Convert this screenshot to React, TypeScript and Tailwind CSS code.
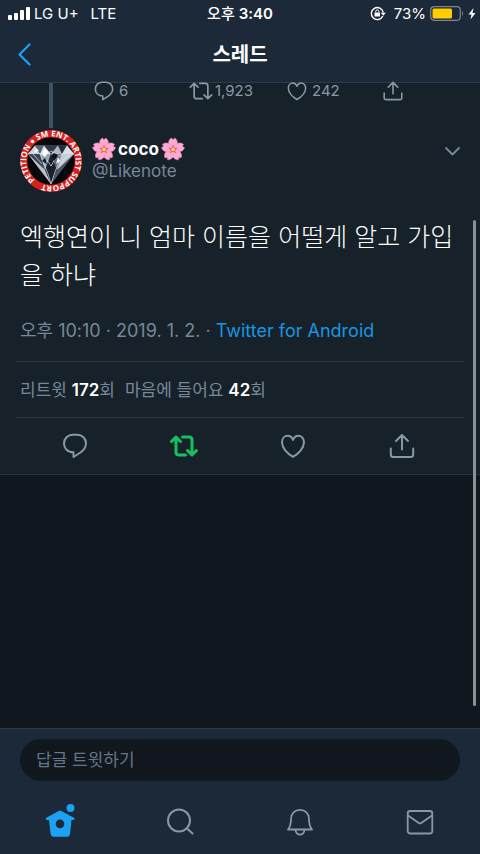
import { useId } from 'react';
import type { ReactNode } from 'react';

type IconProps = { className?: string };

const tabs = [
  { id: 'home', label: '홈', icon: <HomeIcon /> },
  { id: 'search', label: '검색', icon: <SearchIcon /> },
  { id: 'alerts', label: '알림', icon: <BellIcon /> },
  { id: 'messages', label: '쪽지', icon: <MailIcon /> },
];

function Stroke({
  children,
  className = '',
  width = 2,
}: {
  children: ReactNode;
  className?: string;
  width?: number;
}) {
  return (
    <svg
      viewBox="0 0 28 28"
      fill="none"
      stroke="currentColor"
      strokeWidth={width}
      strokeLinecap="round"
      strokeLinejoin="round"
      aria-hidden="true"
      className={`shrink-0 ${className}`}
    >
      {children}
    </svg>
  );
}

function ReplyIcon({ className }: IconProps) {
  return (
    <Stroke className={className}>
      <path d="M12.500 20.300C6.500 20.300 3 16.500 3 11.500C3 6.400 6.800 2.800 11.800 2.800H16.200C21.200 2.800 25 6.400 25 11.500C25 15.800 22.500 18.300 19.500 20.500L12.500 25Z" />
    </Stroke>
  );
}

function RetweetIcon({ className, width = 2 }: IconProps & { width?: number }) {
  return (
    <Stroke className={className} width={width}>
      <path d="M1.500 9.500L6 5L10.500 9.500M6 5.500V20Q6 23 9 23H15.500M26.500 18.500L22 23L17.500 18.500M22 22.500V8Q22 5 19 5H12.500" />
    </Stroke>
  );
}

function HeartIcon({ className }: IconProps) {
  return (
    <Stroke className={className}>
      <path d="M14 8C13 5.200 11 3.800 8.800 3.800C5.500 3.800 3 6.500 3 10.200C3 16 8.500 21.800 14 24.800C19.500 21.800 25 16 25 10.200C25 6.500 22.500 3.800 19.200 3.800C17 3.800 15 5.200 14 8Z" />
    </Stroke>
  );
}

function ShareIcon({ className }: IconProps) {
  return (
    <Stroke className={className}>
      <path d="M14 17.500V3.500M8 9L14 3L20 9M2.800 16.500V22.500Q2.800 25 5.300 25H22.700Q25.200 25 25.200 22.500V16.500" />
    </Stroke>
  );
}

function HomeIcon() {
  return (
    <svg viewBox="0 0 32 36" className="h-9 w-8" fill="#1da1f2" aria-hidden="true">
      <circle cx="26.500" cy="4" r="4" />
      <path
        fillRule="evenodd"
        d="M16 6.500Q16.500 6.500 17.300 7L30 13.800Q31 14.700 30.300 15.500Q29.800 16.100 27.500 16L26 30Q25.700 32.700 23.200 32.700H9.300Q7 32.700 6.600 30L5 16Q2.500 16.100 2 15.500Q1.300 14.700 2.300 13.800L14.700 7Q15.500 6.500 16 6.500ZM16 15.600A4.300 4.300 0 1 0 16 24.200A4.300 4.300 0 1 0 16 15.600Z"
      />
    </svg>
  );
}

function SearchIcon() {
  return (
    <Stroke className="size-7">
      <circle cx="13" cy="12.500" r="11" />
      <path d="M21 20.500L26.500 25.500" />
    </Stroke>
  );
}

function BellIcon() {
  return (
    <Stroke className="size-7" width={1.8}>
      <path d="M2 21.500C4.500 18.500 5 16 5 11C5 5.500 8.800 1.800 14 1.800C19.200 1.800 23 5.500 23 11C23 16 23.500 18.500 26 21.500ZM9.500 21.500C9.500 28.200 18.500 28.200 18.500 21.500" />
    </Stroke>
  );
}

function MailIcon() {
  return (
    <Stroke className="size-7" width={1.8}>
      <rect x="1.700" y="3" width="24.600" height="22.500" rx="2.500" />
      <path d="M2 7.500L12.800 15Q14 15.800 15.200 15L26 7.500" />
    </Stroke>
  );
}

function Blossom() {
  return (
    <svg viewBox="0 0 24 24" className="size-6 shrink-0" role="img" aria-label="벚꽃">
      {[0, 72, 144, 216, 288].map((deg) => (
        <g key={deg} transform={`rotate(${deg} 12 12.500)`}>
          <path
            d="M12 12.500C6.500 9 6.500 3.500 10.300 1L12 2.700L13.700 1C17.500 3.500 17.500 9 12 12.500Z"
            fill="#ffa9cf"
            stroke="#f08fbd"
            strokeWidth="0.500"
          />
          <path d="M12 12V8.500" stroke="#dc3f87" strokeWidth="0.900" strokeLinecap="round" />
        </g>
      ))}
      <circle cx="12" cy="12.500" r="2.600" fill="#d64b6c" />
      <circle cx="12" cy="12.500" r="2" fill="#ffd24a" />
    </svg>
  );
}

function Avatar() {
  const ring = useId();
  return (
    <svg viewBox="0 0 62 62" className="size-[62px] shrink-0" role="img" aria-label="coco">
      <defs>
        <path
          id={ring}
          d="M15.120 49.920A24.700 24.700 0 0 1 46.880 12.080A24.700 24.700 0 0 1 15.120 49.920"
        />
      </defs>
      <circle cx="31" cy="31" r="31" fill="#d8201f" />
      <circle cx="31" cy="31" r="23.800" fill="#07080b" />
      <path d="M15 15.500L47 15.500L54 24L31 54L8 24Z" fill="#77808f" />
      <path d="M15 15.500L20 24H8Z" fill="#c9d2dd" />
      <path d="M15 15.500H24L20 24Z" fill="#5a6474" />
      <path d="M24 15.500L31 24H20Z" fill="#dfe6ef" />
      <path d="M24 15.500H38L31 24Z" fill="#303848" />
      <path d="M38 15.500L42 24H31Z" fill="#aeb8c6" />
      <path d="M38 15.500H47L42 24Z" fill="#272e3a" />
      <path d="M47 15.500L54 24H42Z" fill="#d7dee7" />
      <path d="M8 24H20L25 40Z" fill="#3b4452" />
      <path d="M8 24L25 40L31 54Z" fill="#b9c2ce" />
      <path d="M20 24H31L25 40Z" fill="#98a3b4" />
      <path d="M31 24L25 40L31 54L37 40Z" fill="#1c222d" />
      <path d="M31 24H42L37 40Z" fill="#5f6979" />
      <path d="M42 24H54L37 40Z" fill="#c3ccd8" />
      <path d="M54 24L37 40L31 54Z" fill="#4a5362" />
      <path
        d="M8 24L16 22L25 26L31 21L39 26L48 21L54 24M20 24L28 44L31 54L35 42L42 24M13 24L22 34M49 24L40 34M27 30L31 36L35 29"
        fill="none"
        stroke="#dde4ec"
        strokeWidth="0.700"
      />
      <path d="M25 19L28 22L25 27L22 24ZM38 27L40 31L36 34ZM16 18L19 21L14 22Z" fill="#fff" />
      <path d="M31 26L34 23L38 25L34 31ZM22 31L25 28L27 34Z" fill="#0d1119" />
      <text
        fill="#fff"
        fontSize="8"
        className="font-['Open_Sans','Noto_Sans',sans-serif] font-bold"
      >
        <textPath href={`#${ring}`}>PETITION ● SM ENT. ARTIST SUPPORT</textPath>
      </text>
    </svg>
  );
}

function StatusBar() {
  return (
    <div className="grid h-[27px] grid-cols-3 items-center px-2 text-[15px] leading-5">
      <div className="flex items-center gap-1">
        <svg viewBox="0 0 22 14" className="h-3.5 w-[22px]" fill="#fff" aria-hidden="true">
          <rect x="0" y="8" width="4" height="5" rx="1" />
          <rect x="6" y="6" width="4" height="7" rx="1" />
          <rect x="12" y="3" width="4" height="10" rx="1" />
          <rect x="18" y="0" width="4" height="13" rx="1" />
        </svg>
        <span>LG U+</span>
        <span className="ml-2">LTE</span>
      </div>
      <span className="text-center font-medium">
        오후 <span className="font-semibold">3:40</span>
      </span>
      <div className="-mr-1 flex items-center justify-end gap-1">
        <svg viewBox="0 0 16 16" className="mr-1 size-4" fill="none" stroke="#fff" strokeWidth="1.400" aria-hidden="true">
          <path d="M12.800 10A6 6 0 1 1 13.200 6.500" />
          <path d="M10.800 6.700H15.800L13.300 9.700Z" fill="#fff" stroke="none" />
          <rect x="4.500" y="6.500" width="5.500" height="4" rx="0.500" fill="#fff" stroke="none" />
          <path d="M5.700 6.500V5.500A1.600 1.600 0 0 1 8.900 5.500V6.500" strokeWidth="1" />
        </svg>
        <span>73%</span>
        <svg viewBox="0 0 34 16" className="h-4 w-[34px]" aria-hidden="true">
          <rect x="0.700" y="0.700" width="29.600" height="13.600" rx="3.500" fill="none" stroke="#7d8791" strokeWidth="1.200" />
          <rect x="2.500" y="2.500" width="19.500" height="10" rx="1.500" fill="#ffcc00" />
          <path d="M32 5Q34 7.500 32 10Z" fill="#7d8791" />
        </svg>
        <svg viewBox="0 0 8 12" className="h-3 w-2" fill="#fff" aria-hidden="true">
          <path d="M5.500 0L0.500 6.500H3.500L2.500 11.500L7.500 5H4.500Z" />
        </svg>
      </div>
    </div>
  );
}

export default function App() {
  return (
    <div className="flex h-screen flex-col bg-[#10171e] font-['Inter','Noto_Sans_CJK_KR',sans-serif] text-white">
      <header className="border-b border-[#2b3b4a] bg-[#1c2938]">
        <StatusBar />
        <div className="grid h-[55px] grid-cols-3 items-center px-4">
          <button type="button" aria-label="뒤로" className="text-[#1da1f2]">
            <svg viewBox="0 0 16 24" className="h-6 w-4" fill="none" stroke="currentColor" strokeWidth="2.200" strokeLinecap="round" strokeLinejoin="round" aria-hidden="true">
              <path d="M13.500 1.500L3.500 11.500L13.500 21.500" />
            </svg>
          </button>
          <h1 className="text-center text-xl leading-6 font-bold">스레드</h1>
        </div>
      </header>

      <main className="relative flex-1">
        <article className="border-b border-[#26333f] bg-[#17212a]">
          <div className="flex h-[45px] text-[15px] leading-4 text-[#8899a6]">
            <div className="ml-[49px] w-1 shrink-0 bg-[#3d5466]" />
            <div className="ml-10 grid h-4 flex-1 grid-cols-[96px_97px_96px_1fr] grid-rows-[16px]">
              <button type="button" aria-label="답글" className="flex items-center gap-1">
                <ReplyIcon className="size-[22px]" />6
              </button>
              <button type="button" aria-label="리트윗" className="flex items-center gap-0.5">
                <RetweetIcon className="size-6" />
                1,923
              </button>
              <button type="button" aria-label="마음에 들어요" className="flex items-center gap-1">
                <HeartIcon className="size-[22px]" />
                242
              </button>
              <button type="button" aria-label="공유" className="flex items-center">
                <ShareIcon className="size-[22px]" />
              </button>
            </div>
          </div>

          <div className="flex gap-2.5 px-5 pt-0.5">
            <Avatar />
            <div className="flex-1 pt-[7px]">
              <div className="flex items-center">
                <Blossom />
                <span className="px-0.5 text-[17px] leading-6 font-bold">coco</span>
                <Blossom />
              </div>
              <p className="text-[17px] leading-5 text-[#76889a]">@Likenote</p>
            </div>
            <button type="button" aria-label="더 보기" className="mt-[13px] h-4 text-[#76889a]">
              <svg viewBox="0 0 16 16" className="size-4" fill="none" stroke="currentColor" strokeWidth="1.800" strokeLinecap="round" strokeLinejoin="round" aria-hidden="true">
                <path d="M2 5L8.500 11.500L15 5" />
              </svg>
            </button>
          </div>

          <p className="px-5 pt-[26px] text-[25px] leading-[38px] font-light">
            엑행연이 니 엄마 이름을 어떨게 알고 가입을 하냐
          </p>

          <p className="px-5 pt-[25px] pb-[18px] text-lg leading-6 text-[#76889a]">
            오후 10:10 · 2019. 1. 2. ·{' '}
            <a href="#client" className="text-[#1b95e0]">
              Twitter for Android
            </a>
          </p>

          <div className="mx-4 flex h-[57px] items-center gap-2.5 border-y border-[#2b3843] px-1 text-[17px] leading-6 text-[#76889a]">
            <span>
              리트윗 <b className="font-semibold text-white">172</b>회
            </span>
            <span>
              마음에 들어요 <b className="font-semibold text-white">42</b>회
            </span>
          </div>

          <div className="grid h-14 grid-cols-4 items-center pr-6 pl-5 text-[#8899a6]">
            <button type="button" aria-label="답글" className="flex justify-center">
              <ReplyIcon className="size-7" />
            </button>
            <button type="button" aria-label="리트윗 취소" className="flex justify-center text-[#17bf63]">
              <RetweetIcon className="size-7" width={3} />
            </button>
            <button type="button" aria-label="마음에 들어요" className="flex justify-center">
              <HeartIcon className="size-7" />
            </button>
            <button type="button" aria-label="공유" className="flex justify-center">
              <ShareIcon className="size-7" />
            </button>
          </div>
        </article>
        <div className="absolute top-[137px] right-1 bottom-[22px] w-[3px] rounded-full bg-[#8b9095]" />
      </main>

      <footer className="border-t border-[#2b3b4a] bg-[#1c2938]">
        <div className="px-5 pt-2.5">
          <input
            type="text"
            aria-label="답글 트윗하기"
            placeholder="답글 트윗하기"
            className="h-[42px] w-full rounded-full bg-[#10171e] px-4 text-[17px] text-white outline-none placeholder:text-[#657786]"
          />
        </div>
        <nav className="grid h-[73px] grid-cols-4 items-center text-[#8899a6]">
          {tabs.map((tab) => (
            <button key={tab.id} type="button" aria-label={tab.label} className="flex h-full items-center justify-center pt-2">
              {tab.icon}
            </button>
          ))}
        </nav>
      </footer>
    </div>
  );
}
